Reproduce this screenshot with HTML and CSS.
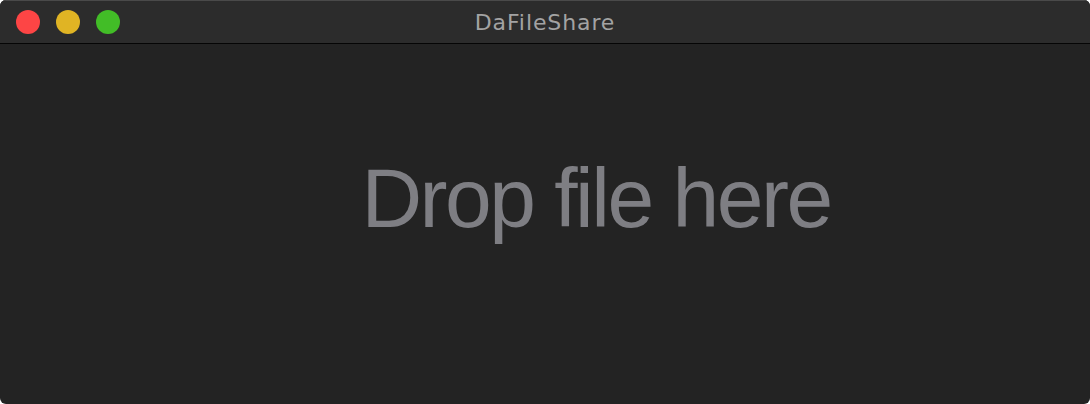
FILE: index.html
```html
<!DOCTYPE html>
<html lang="en">
<head>
<meta charset="utf-8">
<title>DaFileShare</title>
<link rel="stylesheet" href="styles.css">
</head>
<body>
<div class="window">
  <header class="titlebar">
    <div class="lights">
      <span class="light close"></span>
      <span class="light minimize"></span>
      <span class="light zoom"></span>
    </div>
    <div class="title">DaFileShare</div>
  </header>
  <main class="content">
    <div class="drop">Drop file here</div>
  </main>
</div>
</body>
</html>
```
FILE: styles.css
```css
html, body {
  margin: 0;
  padding: 0;
  background: #ffffff;
  width: 1090px;
  height: 404px;
  overflow: hidden;
}

.window {
  width: 1090px;
  height: 404px;
  border-radius: 6px;
  overflow: hidden;
  display: flex;
  flex-direction: column;
  background: #232323;
}

.titlebar {
  position: relative;
  height: 44px;
  flex: 0 0 44px;
  background: #2c2c2c;
  border-top: 1px solid #4a4a4a;
  border-bottom: 1px solid #050505;
  box-sizing: border-box;
  display: flex;
  align-items: center;
  justify-content: center;
}

.lights {
  position: absolute;
  left: 16px;
  top: 9px;
  display: flex;
  gap: 16px;
}

.light {
  width: 24px;
  height: 24px;
  border-radius: 50%;
  display: block;
}

.close { background: #fd4545; }
.minimize { background: #e0b424; }
.zoom { background: #42bd27; }

.title {
  font-family: "DejaVu Sans", sans-serif;
  font-size: 22px;
  letter-spacing: 0.9px;
  color: #a3a3a3;
  line-height: 1;
  margin-top: 1px;
}

.content {
  flex: 1;
  display: flex;
  justify-content: center;
  align-items: flex-start;
  padding-left: 102px;
  padding-top: 112px;
}

.drop {
  font-family: "Liberation Sans", Arial, sans-serif;
  font-size: 84px;
  line-height: 1;
  letter-spacing: -2.5px;
  color: #7e7e83;
}
```
